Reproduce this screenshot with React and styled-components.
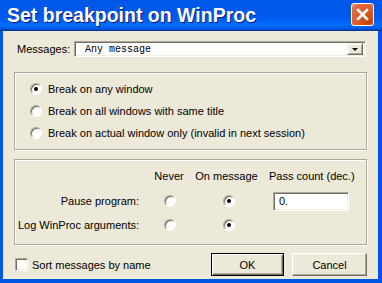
import styled, { createGlobalStyle } from "styled-components";

const GlobalStyle = createGlobalStyle`
  html, body {
    margin: 0;
    padding: 0;
    background: #ffffff;
  }
  body {
    font-family: "Liberation Sans", Arial, sans-serif;
    font-size: 11px;
    color: #000;
  }
`;

const Window = styled.div`
  width: 382px;
  height: 283px;
  box-sizing: border-box;
  display: flex;
  flex-direction: column;
  background: #0055e5;
  overflow: hidden;
`;

const TitleBar = styled.div`
  height: 31px;
  flex: none;
  display: flex;
  justify-content: space-between;
  padding: 0 8px 0 7px;
  background: linear-gradient(
    180deg,
    #0058e8 0%,
    #0058ec 50%,
    #005ef5 65%,
    #046cfe 80%,
    #0064ef 88%,
    #0052d6 94%,
    #0040ab 97%,
    #003092 100%
  );
`;

const Title = styled.span`
  align-self: center;
  margin-top: -1px;
  font-size: 19.5px;
  font-weight: bold;
  color: #fff;
  text-shadow: 1px 1px 0 #0a1883;
`;

const CloseButton = styled.div`
  margin-top: 3px;
  width: 23px;
  height: 23px;
  box-sizing: border-box;
  border: 1px solid #fff;
  border-radius: 3px;
  background: radial-gradient(
    circle at 80% 85%,
    #c84300 0%,
    #dc5a22 45%,
    #e46a40 80%,
    #f09a80 100%
  );
  display: flex;
  align-items: center;
  justify-content: center;
`;

const Client = styled.div`
  flex: 1;
  margin: 0 4px 4px 3px;
  background: #ece9d8;
  padding: 10px 11px 0 11px;
  display: flex;
  flex-direction: column;
`;

const MessagesRow = styled.div`
  display: flex;
  align-items: center;
  height: 16px;
  margin-bottom: 15px;
`;

const FieldLabel = styled.span`
  width: 57px;
  padding-left: 3px;
`;

const Sunken = styled.div`
  box-sizing: border-box;
  background: #fff;
  border: 1px solid;
  border-color: #aca899 #fff #fff #aca899;
  box-shadow: inset 1px 1px 0 #716f64, inset -1px -1px 0 #f1efe2;
`;

const Combo = styled(Sunken)`
  flex: 1;
  height: 16px;
  margin-right: 1px;
  display: flex;
  align-items: center;
  padding: 2px 2px 2px 10px;
  font-family: "Liberation Mono", "DejaVu Sans Mono", monospace;
  font-size: 10px;
`;

const ComboText = styled.span`
  flex: 1;
`;

const DropButton = styled.div`
  width: 16px;
  height: 12px;
  box-sizing: border-box;
  background: #ece9d8;
  border: 1px solid;
  border-color: #f1efe2 #716f64 #716f64 #f1efe2;
  box-shadow: inset 1px 1px 0 #fff, inset -1px -1px 0 #aca899;
  display: flex;
  align-items: center;
  justify-content: center;
  &::after {
    content: "";
    border-left: 3px solid transparent;
    border-right: 3px solid transparent;
    border-top: 3px solid #000;
  }
`;

const GroupBox = styled.div`
  box-sizing: border-box;
  height: ${(p) => p.$height}px;
  margin-top: ${(p) => p.$gap || 0}px;
  border: 1px solid #aca899;
  box-shadow: inset 1px 1px 0 #fff, 1px 1px 0 #fff;
`;

const RadioList = styled.div`
  padding: 5px 0 0 15px;
  display: flex;
  flex-direction: column;
`;

const RadioRow = styled.div`
  height: 22px;
  display: flex;
  align-items: center;
  gap: 6px;
`;

const Radio = styled.span`
  width: 12px;
  height: 12px;
  box-sizing: border-box;
  border-radius: 50%;
  background: #fff;
  border: 1px solid;
  border-color: #aca899 #fff #fff #aca899;
  box-shadow: inset 1px 1px 0 #716f64;
  display: flex;
  align-items: center;
  justify-content: center;
  &::after {
    content: "";
    width: 4px;
    height: 4px;
    border-radius: 50%;
    background: ${(p) => (p.$checked ? "#000" : "transparent")};
  }
`;

const OptionGrid = styled.div`
  display: grid;
  grid-template-columns: 125px 58px 60px 1fr;
  grid-template-rows: 14px 36px 12px;
  align-items: center;
  padding: 9px 0 0 0;
`;

const Header = styled.span`
  justify-self: ${(p) => (p.$left ? "start" : "center")};
  padding-left: ${(p) => (p.$left ? 11 : 0)}px;
  margin-left: ${(p) => p.$shift || 0}px;
  white-space: nowrap;
`;

const RowLabel = styled.span`
  justify-self: end;
  padding-right: 1px;
  white-space: nowrap;
`;

const Cell = styled.div`
  justify-self: center;
  margin-left: ${(p) => p.$shift || 0}px;
`;

const CountEdit = styled(Sunken)`
  width: 76px;
  height: 19px;
  margin-left: 15px;
  padding-left: 5px;
  display: flex;
  align-items: center;
`;

const BottomRow = styled.div`
  display: flex;
  align-items: center;
  height: 23px;
  margin-top: 8px;
`;

const Checkbox = styled(Sunken)`
  width: 13px;
  height: 13px;
  margin: 0 4px 0 1px;
`;

const ButtonGroup = styled.div`
  margin-left: auto;
  display: flex;
  gap: 8px;
`;

const Button = styled.div`
  width: ${(p) => p.$width}px;
  height: 23px;
  box-sizing: border-box;
  background: #ece9d8;
  border: 1px solid;
  border-color: ${(p) =>
    p.$default ? "#000" : "#fff #716f64 #716f64 #fff"};
  box-shadow: ${(p) =>
    p.$default
      ? "inset 1px 1px 0 #fff, inset -1px -1px 0 #716f64, inset -2px -2px 0 #aca899"
      : "inset -1px -1px 0 #aca899, inset 1px 1px 0 #f1efe2"};
  display: flex;
  align-items: center;
  justify-content: center;
`;

export default function App() {
  return (
    <Window>
      <GlobalStyle />
      <TitleBar>
        <Title>Set breakpoint on WinProc</Title>
        <CloseButton>
          <svg width="13" height="13" viewBox="0 0 13 13">
            <path
              d="M2 2 L11 11 M11 2 L2 11"
              stroke="#fff"
              strokeWidth="2.6"
              strokeLinecap="square"
            />
          </svg>
        </CloseButton>
      </TitleBar>
      <Client>
        <MessagesRow>
          <FieldLabel>Messages:</FieldLabel>
          <Combo>
            <ComboText>Any message</ComboText>
            <DropButton />
          </Combo>
        </MessagesRow>

        <GroupBox $height={78}>
          <RadioList>
            <RadioRow>
              <Radio $checked />
              Break on any window
            </RadioRow>
            <RadioRow>
              <Radio />
              Break on all windows with same title
            </RadioRow>
            <RadioRow>
              <Radio />
              Break on actual window only (invalid in next session)
            </RadioRow>
          </RadioList>
        </GroupBox>

        <GroupBox $height={86} $gap={9}>
          <OptionGrid>
            <span />
            <Header>Never</Header>
            <Header $shift={-3}>On message</Header>
            <Header $left>Pass count (dec.)</Header>

            <RowLabel>Pause program:</RowLabel>
            <Cell $shift={2}>
              <Radio />
            </Cell>
            <Cell $shift={2}>
              <Radio $checked />
            </Cell>
            <CountEdit>0.</CountEdit>

            <RowLabel>Log WinProc arguments:</RowLabel>
            <Cell $shift={2}>
              <Radio />
            </Cell>
            <Cell $shift={2}>
              <Radio $checked />
            </Cell>
            <span />
          </OptionGrid>
        </GroupBox>

        <BottomRow>
          <Checkbox />
          Sort messages by name
          <ButtonGroup>
            <Button $width={73} $default>
              OK
            </Button>
            <Button $width={75}>Cancel</Button>
          </ButtonGroup>
        </BottomRow>
      </Client>
    </Window>
  );
}
